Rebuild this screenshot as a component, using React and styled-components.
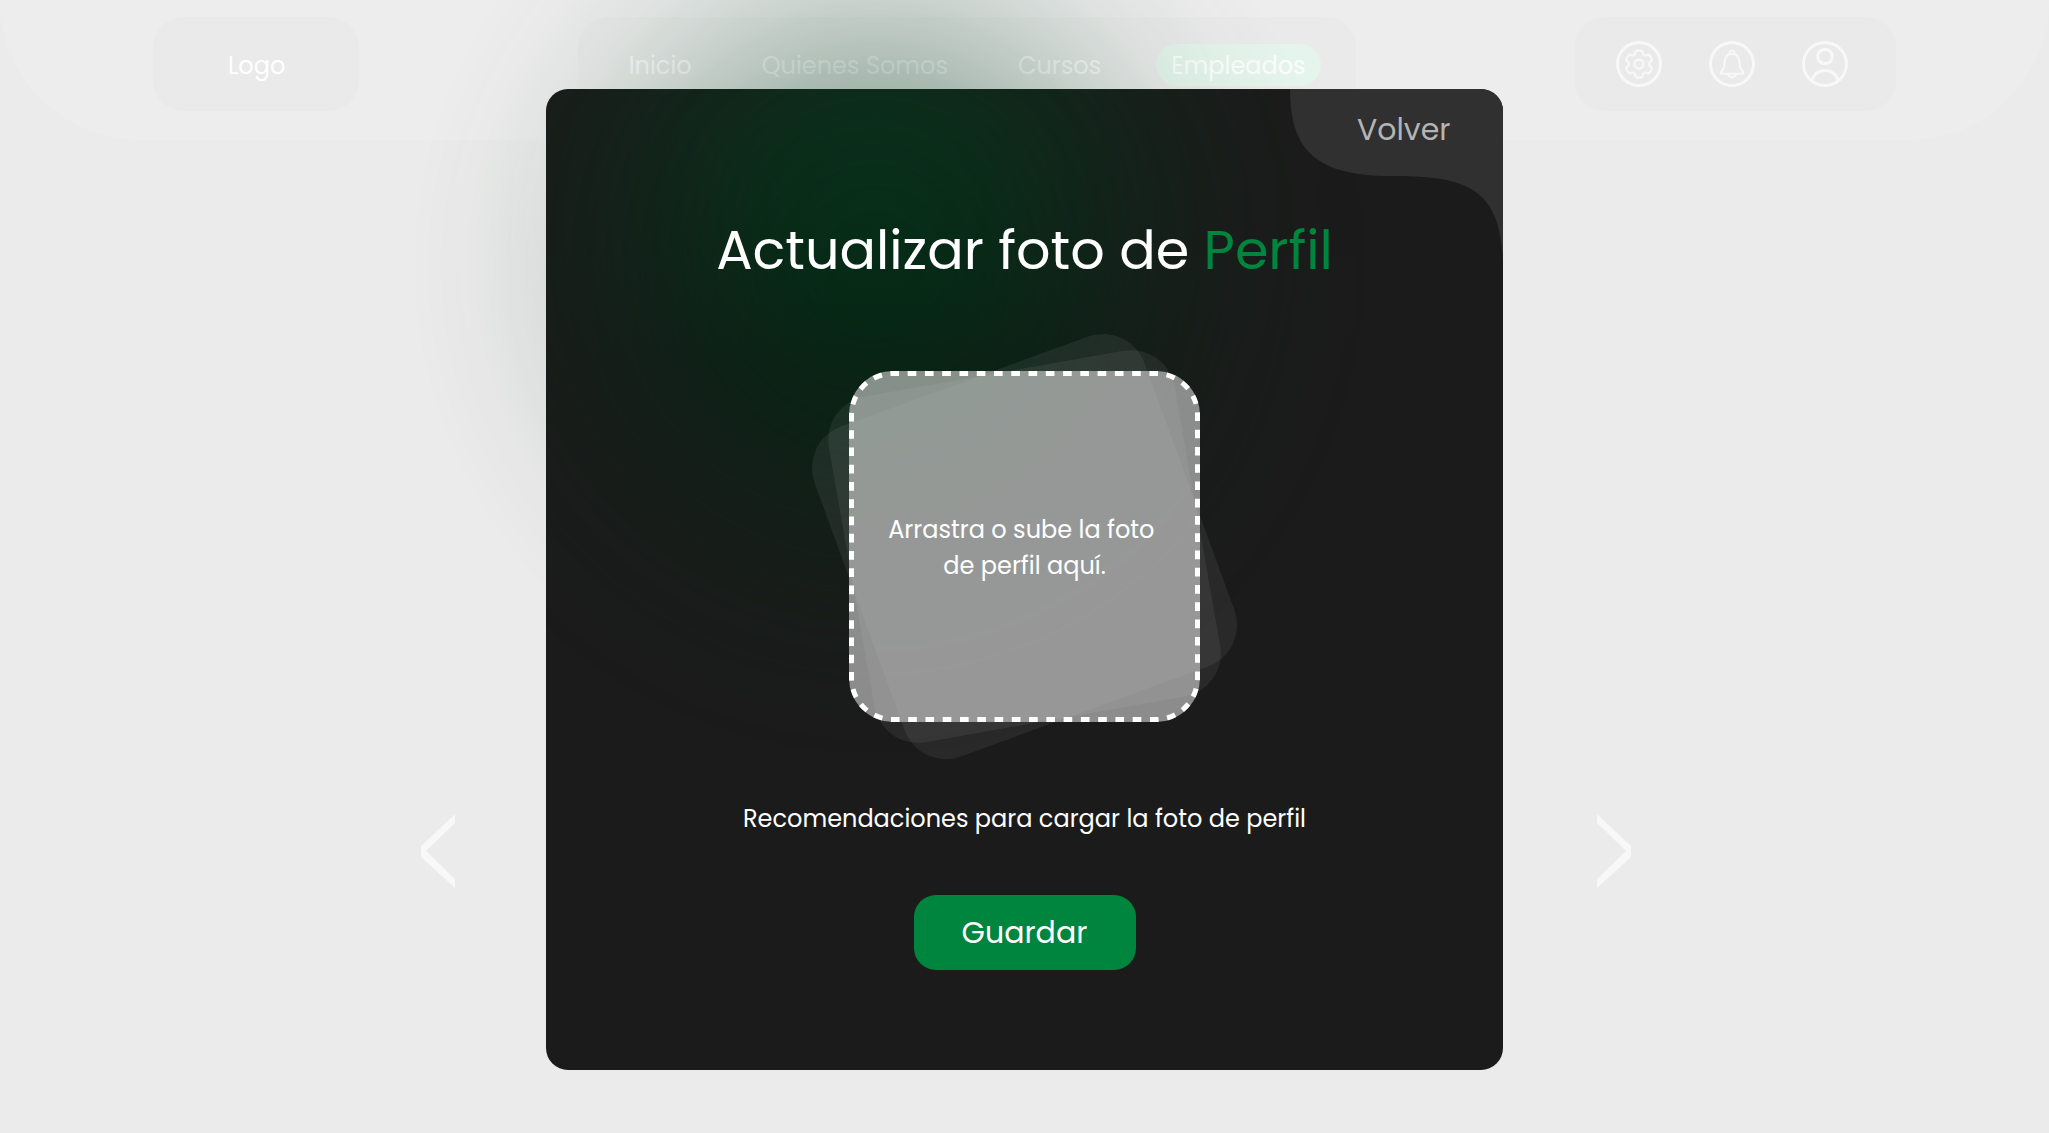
import React, { useState } from "react";
import styled, { createGlobalStyle } from "styled-components";
import { HiOutlineCog6Tooth } from "react-icons/hi2";

const GlobalStyle = createGlobalStyle`
  *, *::before, *::after { box-sizing: border-box; }
  body {
    margin: 0;
    background: #ebebeb;
    color: #fff;
    font-family: Poppins, Inter, "Open Sans", sans-serif;
    font-size: 24px;
  }
  button { border: 0; padding: 0; background: none; color: inherit; font: inherit; cursor: pointer; }
  a { color: inherit; text-decoration: none; }
`;

const Page = styled.div`
  position: relative;
  min-height: 100vh;
  overflow: hidden;
`;

const Header = styled.header`
  display: flex;
  justify-content: space-between;
  align-items: flex-start;
  height: 140px;
  padding: 17px 153px 0;
  border-radius: 0 0 140px 140px;
  background: #ededed;
`;

const HeaderBox = styled.div`
  display: flex;
  align-items: center;
  justify-content: center;
  gap: ${(p) => p.$gap || 0}px;
  height: 94px;
  padding: ${(p) => p.$pad};
  border-radius: 30px;
  background: rgba(226, 226, 226, 0.2);
`;

const NavLink = styled.a`
  height: 42px;
  padding: 0 15px;
  border-radius: 21px;
  line-height: 44px;
  color: rgba(255, 255, 255, 0.9);
  background: ${(p) => (p.$active ? "#e5f4ec" : "transparent")};
`;

const IconButton = styled.button`
  display: grid;
  place-items: center;
  width: 46px;
  height: 46px;
  border-radius: 50%;
  color: #f8f8f8;
  box-shadow: inset 0 0 0 3px currentColor;
`;

const Carousel = styled.main`
  display: flex;
  justify-content: space-between;
  padding: 674px 418px 0 421px;
`;

const ArrowButton = styled.button`
  width: 34px;
  height: 74px;
  color: #f8f8f8;
  svg { display: block; }
`;

const glowShape = `radial-gradient(circle closest-side,
  rgba(0,0,0,1) 0%, rgba(0,0,0,0.95) 12%, rgba(0,0,0,0.81) 24%, rgba(0,0,0,0.62) 36%,
  rgba(0,0,0,0.42) 48%, rgba(0,0,0,0.25) 60%, rgba(0,0,0,0.12) 72%, rgba(0,0,0,0.04) 86%, transparent 100%)`;

const Glow = styled.div`
  position: absolute;
  left: calc(50% - ${(p) => p.$size / 2 + 150}px);
  top: ${(p) => p.$center - p.$size / 2}px;
  width: ${(p) => p.$size}px;
  height: ${(p) => p.$size}px;
  pointer-events: none;
  opacity: ${(p) => p.$strength};
  background: linear-gradient(#003c1c 35%, #002812 60%);
  mask-image: ${glowShape};
`;

const Overlay = styled.div`
  position: absolute;
  inset: 0;
  display: flex;
  justify-content: center;
  align-items: flex-start;
  padding-top: 89px;
`;

const Modal = styled.section`
  position: relative;
  width: 957px;
  max-width: 100%;
  padding-bottom: 100px;
  border-radius: 22px;
  overflow: hidden;
  background: #1b1b1b;
`;

const ModalForm = styled.form`
  position: relative;
  display: flex;
  flex-direction: column;
  align-items: center;
`;

const BackButton = styled.button`
  position: absolute;
  top: 0;
  right: 0;
  z-index: 1;
  width: 213px;
  height: 175px;
  svg { display: block; }
`;

const BackLabel = styled.span`
  position: absolute;
  top: 20px;
  left: 67px;
  font-size: 30px;
  line-height: 42px;
  color: #b4b4b4;
`;

const Title = styled.h1`
  margin: 121px 0 0;
  font-size: 54px;
  line-height: 80px;
  font-weight: 400;
  span { color: #00853e; }
`;

const PhotoStack = styled.div`
  position: relative;
  width: 351px;
  height: 351px;
  margin-top: 81px;
`;

const Sheet = styled.span`
  position: absolute;
  inset: 0;
  border-radius: 44px;
  background: rgba(217, 217, 217, 0.08);
  transform: rotate(${(p) => p.$angle}deg);
`;

const DropZone = styled.label`
  position: relative;
  display: grid;
  place-items: center;
  height: 100%;
  padding-top: 2px;
  border-radius: 44px;
  background: rgba(217, 217, 217, 0.6);
  line-height: 36px;
  text-align: center;
  cursor: pointer;
`;

const DashedFrame = styled.svg`
  position: absolute;
  inset: 0;
`;

const DropText = styled.span`
  max-width: 290px;
  overflow: hidden;
  text-overflow: ellipsis;
  white-space: pre;
`;

const FileInput = styled.input`
  position: absolute;
  width: 1px;
  height: 1px;
  opacity: 0;
`;

const Advice = styled.p`
  margin: 79px 0 0;
  line-height: 36px;
`;

const SaveButton = styled.button`
  width: 222px;
  height: 75px;
  margin-top: 58px;
  border-radius: 22px;
  background: #00853e;
  font-size: 30px;
`;

const BellIcon = () => (
  <svg width="46" height="46" viewBox="0 0 46 46" fill="none" stroke="currentColor" strokeWidth="2" strokeLinejoin="round" aria-hidden="true">
    <path d="M20.7 13.2a2.6 2.6 0 1 1 4.6 0" />
    <path d="M23 13c-4.600 0-6.800 3-7.200 7-.4 4.500-.7 7.500-2.500 9.200-1.200 1.100-1.600 1.500-1.600 2.300 0 .9.600 1.300 1.500 1.300h19.600c.9 0 1.500-.4 1.500-1.300 0-.8-.4-1.200-1.600-2.300-1.800-1.700-2.100-4.700-2.500-9.200-.4-4-2.600-7-7.200-7z" />
    <path d="M19 33c.4 2 1.900 3.200 4 3.200s3.600-1.200 4-3.200" />
  </svg>
);

const UserIcon = () => (
  <svg width="46" height="46" viewBox="0 0 46 46" fill="none" stroke="currentColor" strokeWidth="3" aria-hidden="true">
    <circle cx="23" cy="15.500" r="7.300" />
    <path d="M9.500 39.500C12 33 17 29.500 23 29.500s11 3.500 13.500 10" />
  </svg>
);

const Arrow = ({ right }) => (
  <svg width="34" height="74" viewBox="0 0 34 74" fill="currentColor" aria-hidden="true">
    <path d={right ? "M0 0 34 32V43L0 74V65L29 37 0 9z" : "M34 0 0 32V43L34 74V65L5 37 34 9z"} />
  </svg>
);

const links = ["Inicio", "Quienes Somos", "Cursos", "Empleados"];
const dropPrompt = "Arrastra o sube la foto \nde perfil aquí.";

export default function App() {
  const [fileName, setFileName] = useState("");

  return (
    <Page>
      <GlobalStyle />
      <Header>
        <HeaderBox as="a" href="#logo" $pad="3px 74px 0 75px">Logo</HeaderBox>
        <HeaderBox as="nav" $gap={40} $pad="2px 35px 0 36px">
          {links.map((label) => (
            <NavLink key={label} href="#nav" $active={label === "Empleados"}>{label}</NavLink>
          ))}
        </HeaderBox>
        <HeaderBox $gap={47} $pad="0 48px 0 42px">
          <IconButton aria-label="Ajustes"><HiOutlineCog6Tooth size={36} /></IconButton>
          <IconButton aria-label="Notificaciones"><BellIcon /></IconButton>
          <IconButton aria-label="Cuenta"><UserIcon /></IconButton>
        </HeaderBox>
      </Header>
      <Carousel>
        <ArrowButton aria-label="Anterior"><Arrow /></ArrowButton>
        <ArrowButton aria-label="Siguiente"><Arrow right /></ArrowButton>
      </Carousel>
      <Glow $size={940} $center={265} $strength={0.5} />
      <Overlay>
        <Modal role="dialog" aria-modal="true" aria-labelledby="dialog-title">
          <Glow $size={1000} $center={175} $strength={0.78} />
          <BackButton type="button">
            <svg width="213" height="175" viewBox="0 0 213 175" aria-hidden="true">
              <path d="M0 0C0 60 25 87 101 87 175 87 211 97 213 175V0z" fill="#303030" />
            </svg>
            <BackLabel>Volver</BackLabel>
          </BackButton>
          <ModalForm onSubmit={(e) => e.preventDefault()}>
            <Title id="dialog-title">Actualizar foto de <span>Perfil</span></Title>
            <PhotoStack>
              <Sheet $angle={-10} />
              <Sheet $angle={-20} />
              <DropZone>
                <DashedFrame width="351" height="351" viewBox="0 0 351 351" aria-hidden="true">
                  <rect x="2.500" y="2.500" width="346" height="346" rx="41.500" fill="none" stroke="#fff"
                    strokeWidth="5" pathLength="1520" strokeDasharray="10 10" strokeDashoffset="3" />
                </DashedFrame>
                <FileInput
                  type="file"
                  accept="image/*"
                  onChange={(e) => setFileName(e.target.files[0] ? e.target.files[0].name : "")}
                />
                <DropText>{fileName || dropPrompt}</DropText>
              </DropZone>
            </PhotoStack>
            <Advice>Recomendaciones para cargar la foto de perfil</Advice>
            <SaveButton type="submit">Guardar</SaveButton>
          </ModalForm>
        </Modal>
      </Overlay>
    </Page>
  );
}
